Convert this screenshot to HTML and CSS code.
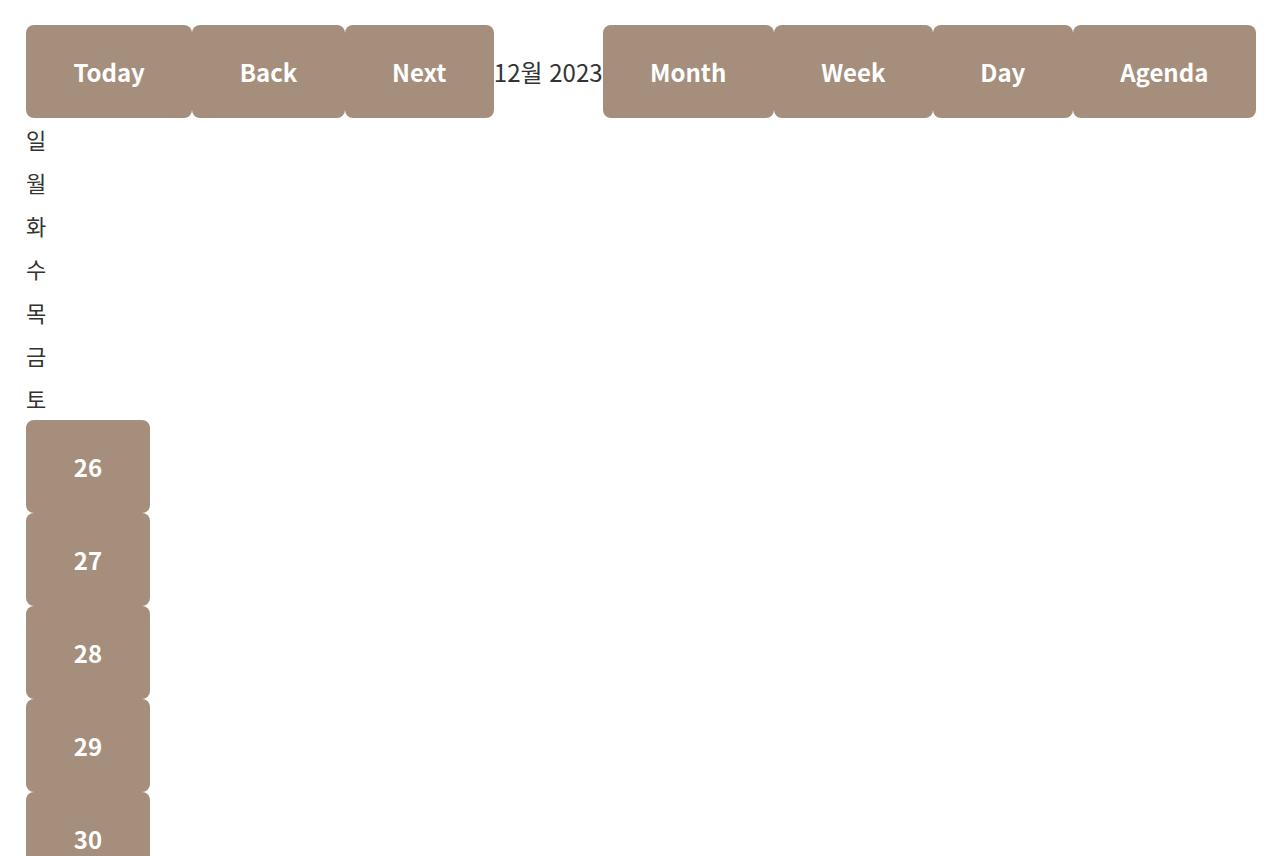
FILE: index.html
```html
<!DOCTYPE html>
<html lang="ko">
<head>
<meta charset="utf-8">
<link rel="stylesheet" href="styles.css">
</head>
<body>
<div class="page">
  <div class="toolbar">
    <button class="btn">Today</button>
    <button class="btn">Back</button>
    <button class="btn">Next</button>
    <span class="label">12월 2023</span>
    <button class="btn">Month</button>
    <button class="btn">Week</button>
    <button class="btn">Day</button>
    <button class="btn">Agenda</button>
  </div>
  <div class="weekdays">
    <div class="wd">일</div>
    <div class="wd">월</div>
    <div class="wd">화</div>
    <div class="wd">수</div>
    <div class="wd">목</div>
    <div class="wd">금</div>
    <div class="wd">토</div>
  </div>
  <div class="days">
    <button class="btn day">26</button>
    <button class="btn day">27</button>
    <button class="btn day">28</button>
    <button class="btn day">29</button>
    <button class="btn day">30</button>
  </div>
</div>
</body>
</html>
```
FILE: styles.css
```css
html, body {
  margin: 0;
  padding: 0;
  background: #ffffff;
}
body {
  font-family: "Noto Sans CJK KR", "Noto Sans", sans-serif;
  color: #333333;
  font-size: 24px;
}
.page {
  padding: 25px 0 0 26px;
}
.toolbar {
  display: flex;
  align-items: center;
}
.btn {
  font-family: "Noto Sans CJK KR", "Noto Sans", sans-serif;
  font-size: 24px;
  font-weight: 700;
  line-height: 43px;
  color: #ffffff;
  background: #a58f7c;
  border: none;
  border-radius: 8px;
  padding: 25px 47.4px;
  margin: 0;
  cursor: pointer;
}
.label {
  font-size: 24px;
  line-height: 43px;
  color: #333333;
  white-space: nowrap;
}
.weekdays {
  display: flex;
  flex-direction: column;
}
.wd {
  font-size: 22px;
  line-height: 43.15px;
  color: #333333;
}
.days {
  display: flex;
  flex-direction: column;
  align-items: flex-start;
}
.day {
  width: 124px;
  padding: 25px 0;
  text-align: center;
}
```
